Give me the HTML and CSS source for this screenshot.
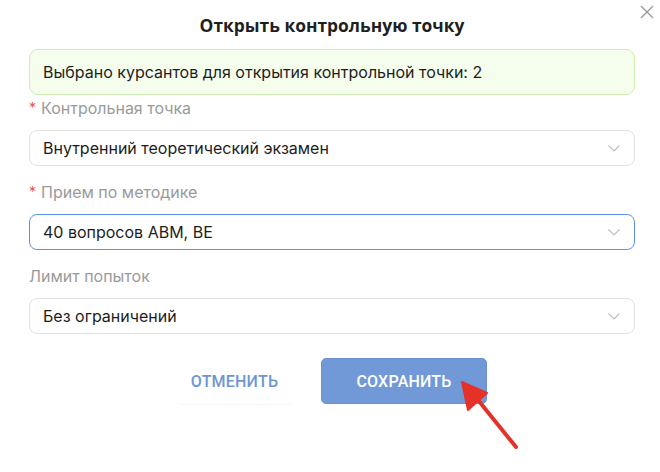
FILE: index.html
```html
<!DOCTYPE html>
<html lang="ru">
<head>
<meta charset="utf-8">
<link rel="stylesheet" href="styles.css">
</head>
<body>
<div class="dialog">
  <button class="close" aria-label="Закрыть">
    <svg width="14" height="14" viewBox="0 0 14 14"><path d="M1 1L13 13M13 1L1 13" stroke="#9a9a9a" stroke-width="1.4" fill="none"/></svg>
  </button>
  <h1 class="title">Открыть контрольную точку</h1>
  <div class="alert">Выбрано курсантов для открытия контрольной точки: 2</div>

  <div class="field first">
    <div class="label"><span class="req">*</span>Контрольная точка</div>
    <div class="select">
      <span>Внутренний теоретический экзамен</span>
      <svg class="chev" width="12" height="7" viewBox="0 0 12 7"><path d="M0.5 0.5L6 6L11.5 0.5" stroke="#bdbdbd" stroke-width="1.1" fill="none"/></svg>
    </div>
  </div>

  <div class="field">
    <div class="label"><span class="req">*</span>Прием по методике</div>
    <div class="select active">
      <span>40 вопросов АВМ, ВЕ</span>
      <svg class="chev" width="12" height="7" viewBox="0 0 12 7"><path d="M0.5 0.5L6 6L11.5 0.5" stroke="#bdbdbd" stroke-width="1.1" fill="none"/></svg>
    </div>
  </div>

  <div class="field">
    <div class="label">Лимит попыток</div>
    <div class="select">
      <span>Без ограничений</span>
      <svg class="chev" width="12" height="7" viewBox="0 0 12 7"><path d="M0.5 0.5L6 6L11.5 0.5" stroke="#bdbdbd" stroke-width="1.1" fill="none"/></svg>
    </div>
  </div>

  <div class="actions">
    <button class="btn cancel">ОТМЕНИТЬ</button>
    <button class="btn save">СОХРАНИТЬ</button>
  </div>

  <svg class="arrow" width="80" height="90" viewBox="0 0 80 90">
    <line x1="76" y1="85" x2="34" y2="33" stroke="#e53228" stroke-width="4" stroke-linecap="round"/>
    <polygon points="22,20 47,31 28,48" fill="#e53228" stroke="#e53228" stroke-width="2" stroke-linejoin="round"/>
  </svg>
</div>
</body>
</html>
```
FILE: styles.css
```css
* { box-sizing: border-box; }
html, body { margin: 0; padding: 0; background: #fff; }
body {
  font-family: Inter, "Noto Sans", sans-serif;
  color: #222;
  width: 660px;
  height: 472px;
  overflow: hidden;
}
.dialog {
  position: relative;
  padding: 0 25px 0 29px;
}
.close {
  position: absolute;
  top: 4px;
  right: 5px;
  background: none;
  border: 0;
  padding: 0;
  width: 16px;
  height: 16px;
  display: flex;
  align-items: center;
  justify-content: center;
}
.title {
  margin: 0;
  height: 49px;
  padding-top: 12px;
  text-align: center;
  font-family: "Open Sans", sans-serif;
  font-weight: 700;
  font-size: 17.4px;
  line-height: 26px;
  color: #1f1f1f;
}
.alert {
  height: 46px;
  background: #f5fdec;
  border: 1px solid #cdeeb0;
  border-radius: 9px;
  padding: 0 13px;
  display: flex;
  align-items: center;
  font-size: 16px;
  color: #1d1d1d;
}
.field { margin-top: 15px; }
.field.first { margin-top: 2px; }
.label {
  display: flex;
  align-items: center;
  height: 22px;
  font-size: 16px;
  line-height: 22px;
  color: #9a9a9a;
  margin-bottom: 11px;
}
.req {
  color: #f0504a;
  margin-right: 5px;
  font-size: 14px;
  line-height: 22px;
}
.select {
  height: 36px;
  border: 1px solid #e2e2e2;
  border-radius: 8px;
  display: flex;
  align-items: center;
  justify-content: space-between;
  padding: 0 14px 0 13px;
  font-size: 16px;
  color: #1d1d1d;
}
.select.active { border-color: #5b92f0; }
.chev { display: block; }
.actions {
  display: flex;
  justify-content: center;
  gap: 29px;
  margin-top: 24px;
}
.btn {
  font-family: Roboto, sans-serif;
  font-weight: 500;
  font-size: 16px;
  letter-spacing: 0.2px;
  height: 46px;
  border-radius: 5px;
  cursor: pointer;
}
.cancel {
  width: 115px;
  background: #fff;
  border: 0;
  color: #6d96d6;
  box-shadow: 0 1px 1px rgba(0,0,0,0.04);
}
.save {
  width: 166px;
  background: #7199d8;
  border: 1px solid #6a90d0;
  color: #fff;
}
.arrow {
  position: absolute;
  left: 440px;
  top: 362px;
}
```
